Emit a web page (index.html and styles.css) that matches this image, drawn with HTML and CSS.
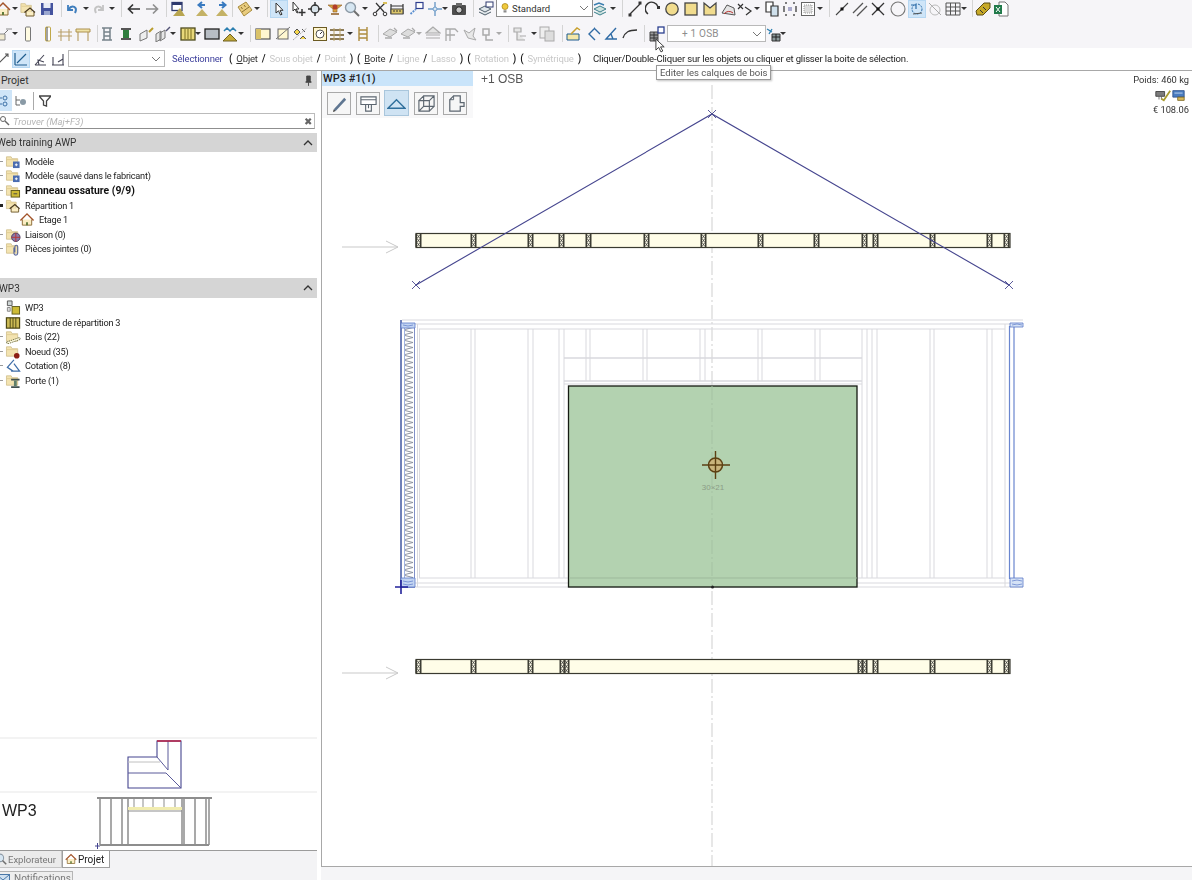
FILE: index.html
```html
<!DOCTYPE html>
<html lang="fr">
<head>
<meta charset="utf-8">
<title>WP3</title>
<link rel="stylesheet" href="styles.css">
</head>
<body>
<svg class="defs" width="0" height="0" aria-hidden="true">
<defs>
<symbol id="folder" viewBox="0 0 16 16"><path d="M1 3h5l1 2h6v8H1z" fill="#f3e3b0" stroke="#cdbb85" stroke-width=".8"/><path d="M1.500 6h11" stroke="#e0cc92"/></symbol>
<symbol id="house" viewBox="0 0 16 16"><path d="M3 8v6h10V8" fill="#fbeec4" stroke="#8b6a33"/><path d="M1 9 8 2l7 7" fill="none" stroke="#a3542a" stroke-width="1.500"/><path d="M7 14v-3h2v3" fill="#5d7a3a"/></symbol>
<symbol id="fhouse" viewBox="0 0 16 16"><use href="#folder" width="14" height="14"/><path d="M6 11v4h8v-4" fill="#fbeec4" stroke="#6f5a2c"/><path d="M4.500 11.500 10 7l5 4.500" fill="none" stroke="#4a3a20" stroke-width="1.300"/></symbol>
<symbol id="save" viewBox="0 0 16 16"><rect x="2" y="2" width="12" height="12" fill="#44539e"/><rect x="4.500" y="2" width="7" height="5" fill="#e8ecf6"/><rect x="5" y="10" width="6" height="4" fill="#9aa7d0"/></symbol>
<symbol id="undo" viewBox="0 0 16 16"><path d="M4 4v5h5" fill="none" stroke="#3f7ebd" stroke-width="1.800"/><path d="M4.500 8.500C8 3 14 6 11 12" fill="none" stroke="#3f7ebd" stroke-width="2"/></symbol>
<symbol id="redo" viewBox="0 0 16 16"><path d="M12 4v5H7" fill="none" stroke="#c4c4c4" stroke-width="1.800"/><path d="M11.500 8.500C8 3 2 6 5 12" fill="none" stroke="#c4c4c4" stroke-width="2"/></symbol>
<symbol id="back" viewBox="0 0 16 16"><path d="M14 8H3M7 3.500 2.500 8 7 12.500" fill="none" stroke="#333" stroke-width="1.700"/></symbol>
<symbol id="fwd" viewBox="0 0 16 16"><path d="M2 8h11M9 3.500 13.500 8 9 12.500" fill="none" stroke="#8f8f8f" stroke-width="1.700"/></symbol>
<symbol id="monitor" viewBox="0 0 16 16"><rect x="2" y="1.500" width="10" height="8" fill="#fff" stroke="#2f3a6e" stroke-width="1.300"/><path d="M2 2h10v2H2z" fill="#2f3a6e"/><path d="M3 15 10 7l5 8z" fill="#b8a550"/></symbol>
<symbol id="up" viewBox="0 0 16 16"><path d="M2 15 8 8l6 7z" fill="#c4b266"/><path d="M11 4H6M8 1 4.500 4 8 7" fill="none" stroke="#3a7ac0" stroke-width="2"/></symbol>
<symbol id="down" viewBox="0 0 16 16"><path d="M2 15 8 8l6 7z" fill="#c4b266"/><path d="M5 4h5M8 1l3.500 3L8 7" fill="none" stroke="#3a7ac0" stroke-width="2"/></symbol>
<symbol id="ruler" viewBox="0 0 16 16"><path d="M1 6 9 1l6 8-8 6z" fill="#e9cc7e" stroke="#a88b3e"/><path d="M4 6l1.500 2M7 4l1.500 2M5 11l7-5" stroke="#8a7030" fill="none"/></symbol>
<symbol id="cursor" viewBox="0 0 16 16"><path d="M5 2v10l2.500-2.200L9.500 14l1.500-.7-2-4h3z" fill="#fff" stroke="#333"/></symbol>
<symbol id="nodeadd" viewBox="0 0 16 16"><path d="M3 1v9l2-2 2 4 1-.5-2-3.500h3z" fill="#fff" stroke="#333"/><path d="M12 8v7M8.500 11.500h7" stroke="#333" stroke-width="1.500"/></symbol>
<symbol id="target" viewBox="0 0 16 16"><circle cx="8" cy="8" r="4" fill="#d9e3ea" stroke="#333" stroke-width="1.300"/><path d="M8 1v4M8 11v4M1 8h4M11 8h4" stroke="#333" stroke-width="1.500"/></symbol>
<symbol id="bow" viewBox="0 0 16 16"><path d="M1 4h14l-5 4v3H6V8z" fill="#d9a441" stroke="#8e5a20" stroke-width=".6"/><circle cx="8" cy="6" r="2.500" fill="#b23c2a"/><path d="M4 13h8" stroke="#8e5a20" stroke-width="1.500"/></symbol>
<symbol id="mag" viewBox="0 0 16 16"><circle cx="6.500" cy="6.500" r="5" fill="#d6e6f2" stroke="#8d9aa6" stroke-width="1.400"/><path d="M10 10l5 5" stroke="#6f6f6f" stroke-width="2"/></symbol>
<symbol id="scis" viewBox="0 0 16 16"><path d="M4 2l8 9M13 2 4 11" stroke="#333" stroke-width="1.200"/><circle cx="3" cy="13" r="1.800" fill="none" stroke="#333"/><circle cx="13" cy="13" r="1.800" fill="none" stroke="#333"/><path d="M11 1h4v2h-4" fill="#d9c05a"/></symbol>
<symbol id="rulerbox" viewBox="0 0 16 16"><path d="M2 3v10M14 3v10M2 5h12" stroke="#333" stroke-width="1.200" fill="none"/><rect x="2" y="8" width="12" height="5" fill="#dcc66a" stroke="#444"/><path d="M5 9v2M8 9v2M11 9v2" stroke="#333"/></symbol>
<symbol id="dotsq" viewBox="0 0 16 16"><rect x="7" y="1.500" width="7" height="6" fill="#fff" stroke="#2f3f8f" stroke-width="1.200"/><path d="M1.500 13 7 8" stroke="#5b8fd0" stroke-width="1.800" stroke-dasharray="2 1"/></symbol>
<symbol id="cross" viewBox="0 0 16 16"><path d="M8 1v14M1 8h14" stroke="#6f9cc8" stroke-width="1.400"/><circle cx="8" cy="8" r="2" fill="#d9e8f5" stroke="#6f9cc8"/></symbol>
<symbol id="camera" viewBox="0 0 16 16"><rect x="1" y="4" width="14" height="10" rx="1" fill="#4e4e4e"/><rect x="5" y="2" width="6" height="3" fill="#6a6a6a"/><circle cx="8" cy="9" r="3.200" fill="#c9c9c9" stroke="#222"/></symbol>
<symbol id="layers" viewBox="0 0 16 16"><path d="M1 8l6-3 6 3-6 3zM1 11l6 3 6-3" fill="#dfe6ea" stroke="#4f5f6a"/><rect x="8" y="1" width="7" height="5" fill="#fff" stroke="#2f3a6e"/></symbol>
<symbol id="bulb" viewBox="0 0 16 16"><circle cx="8" cy="6" r="4" fill="#f0c93c" stroke="#a98616"/><path d="M6 11h4v3H6z" fill="#8c8c8c"/></symbol>
<symbol id="layers2" viewBox="0 0 16 16"><path d="M1 8l6-3 6 3-6 3zM1 11l6 3 6-3" fill="#cfe3df" stroke="#3b7f8c"/><path d="M1 4l5-2 5 2" fill="none" stroke="#3b7fb0" stroke-width="1.500"/></symbol>
<symbol id="line" viewBox="0 0 16 16"><path d="M3 13 13 3" stroke="#333" stroke-width="1.300"/><path d="M1.500 12.500h3v3h-3zM11.500.5h3v3h-3z" fill="#333"/></symbol>
<symbol id="arc" viewBox="0 0 16 16"><path d="M3 13A6.500 6.500 0 1 1 13 6" fill="none" stroke="#333" stroke-width="1.400"/><rect x="12" y="5" width="3" height="3" fill="#333"/></symbol>
<symbol id="circ" viewBox="0 0 16 16"><circle cx="8" cy="8" r="6.200" fill="#f1dc8e" stroke="#444" stroke-width="1.300"/></symbol>
<symbol id="sq" viewBox="0 0 16 16"><rect x="2" y="2" width="12" height="12" fill="#f1dc8e" stroke="#444" stroke-width="1.300"/></symbol>
<symbol id="mm" viewBox="0 0 16 16"><path d="M2 14V2l6 5 6-5v12z" fill="#f1dc8e" stroke="#444" stroke-width="1.200"/></symbol>
<symbol id="arcc" viewBox="0 0 16 16"><path d="M2 12 7 4l7 3 1 7z" fill="#e4e4e4" stroke="#555"/><path d="M4 13A6 6 0 0 1 13 12" fill="none" stroke="#b33"/></symbol>
<symbol id="xtri" viewBox="0 0 16 16"><path d="M1 3l5 5M6 3 1 8M8 6l6 4-5 4" stroke="#333" fill="none" stroke-width="1.200"/></symbol>
<symbol id="docs" viewBox="0 0 16 16"><path d="M2 1h7v10H2z" fill="#fff" stroke="#333" stroke-width="1.200"/><path d="M7 5h7v10H7z" fill="#cfe0ec" stroke="#333" stroke-width="1.200"/></symbol>
<symbol id="dash" viewBox="0 0 16 16"><path d="M3 2h2M3 14h2M11 2h2M11 14h2M2 5v6M14 5v6" stroke="#555" stroke-width="1.500"/><rect x="6" y="6" width="4" height="4" fill="#aac"/></symbol>
<symbol id="frame" viewBox="0 0 16 16"><rect x="1.500" y="1.500" width="13" height="13" fill="#fff" stroke="#666"/><rect x="4" y="4" width="8" height="8" fill="#ddd" stroke="#999" stroke-dasharray="1 1"/></symbol>
<symbol id="sl" viewBox="0 0 16 16"><path d="M2 14 14 2" stroke="#444" stroke-width="1.100"/><rect x="6.500" y="6.500" width="3" height="3" fill="#111"/></symbol>
<symbol id="par" viewBox="0 0 16 16"><path d="M1 12 11 2M5 15 15 5" stroke="#555" stroke-width="1.300"/></symbol>
<symbol id="xx" viewBox="0 0 16 16"><path d="M2 2l12 12M14 2 2 14" stroke="#333" stroke-width="1.300"/><rect x="6.500" y="6.500" width="3" height="3" fill="#111"/></symbol>
<symbol id="ring" viewBox="0 0 16 16"><circle cx="8" cy="8" r="7" fill="none" stroke="#777" stroke-width="1.100"/></symbol>
<symbol id="snap" viewBox="0 0 16 16"><path d="M2 4h5v4" fill="none" stroke="#2b6ca8" stroke-width="1.200"/><circle cx="8" cy="8" r="5" fill="none" stroke="#2b6ca8" stroke-dasharray="2 1"/><path d="M4 13l9-1" stroke="#555"/></symbol>
<symbol id="snap2" viewBox="0 0 16 16"><circle cx="8" cy="9" r="5" fill="none" stroke="#bbb"/><path d="M2 2l12 12" stroke="#aaa"/></symbol>
<symbol id="grid" viewBox="0 0 16 16"><path d="M1 2h14v12H1zM1 6h14M1 10h14M5.500 2v12M10.500 2v12" fill="none" stroke="#555"/></symbol>
<symbol id="wood" viewBox="0 0 16 16"><path d="M1 10 9 2h6v5l-7 7H2z" fill="#c7a928" stroke="#5b4c14"/><path d="M5 9l3 3M8 6l3 3" stroke="#333"/></symbol>
<symbol id="xl" viewBox="0 0 16 16"><path d="M6 1h6l3 3v11H6z" fill="#fff" stroke="#777"/><rect x="1" y="4" width="8" height="9" fill="#217a4b"/><path d="M3 6l4 5M7 6l-4 5" stroke="#fff"/></symbol>
<symbol id="tool1" viewBox="0 0 16 16"><path d="M1 14 11 4" stroke="#777"/><path d="M1 8h7v6H1z" fill="#f1ead0" stroke="#888"/><path d="M9 3h6" stroke="#888"/></symbol>
<symbol id="beam" viewBox="0 0 16 16"><rect x="5.500" y="1" width="5" height="14" rx="1" fill="#fffbe2" stroke="#777"/></symbol>
<symbol id="beamh" viewBox="0 0 16 16"><rect x="5.500" y="1" width="5" height="14" rx="1" fill="#fff" stroke="#c0a84a"/><path d="M7 1v14" stroke="#444"/></symbol>
<symbol id="hframe" viewBox="0 0 16 16"><path d="M1 6h14M1 10h14M4 3v12M12 3v12" stroke="#b9a06a" fill="none" stroke-width="1.100"/></symbol>
<symbol id="hframe2" viewBox="0 0 16 16"><path d="M1 3h14v3H1zM3 6v9M13 6v9" stroke="#ad9150" fill="#f0e3a8"/></symbol>
<symbol id="colg" viewBox="0 0 16 16"><path d="M3 2h10M3 14h10M5 2v12M11 2v12M5 6h6M5 10h6" stroke="#77838a" stroke-width="1.500" fill="none"/></symbol>
<symbol id="coln" viewBox="0 0 16 16"><path d="M3 2h10v2H3zM3 12h10v2H3z" fill="#555"/><rect x="5" y="4" width="6" height="8" fill="#2f7d3e"/></symbol>
<symbol id="iso" viewBox="0 0 16 16"><path d="M1 8l7-4v8l-7 3z" fill="#eee" stroke="#777"/><path d="M10 6l4-4" stroke="#b99c2d" stroke-width="2"/></symbol>
<symbol id="iso2" viewBox="0 0 16 16"><path d="M1 8l5-3v8l-5 3zM5 7l5-3v8l-5 3z" fill="#e6e6e6" stroke="#777"/><path d="M11 5l4-4" stroke="#557" stroke-width="1.500"/></symbol>
<symbol id="ybar" viewBox="0 0 16 16"><rect x="1" y="2" width="14" height="12" fill="#e8d87a" stroke="#4e4a1c" stroke-width="1.300"/><path d="M5 3v10M8 3v10M11 3v10" stroke="#7a6f20"/></symbol>
<symbol id="grect" viewBox="0 0 16 16"><rect x="1" y="3" width="14" height="10" fill="#b7bdc4" stroke="#222" stroke-width="1.300"/></symbol>
<symbol id="tri" viewBox="0 0 16 16"><path d="M1 15 8 8l7 7z" fill="#c4aa38" stroke="#6f6120"/><path d="M2 5l3-3 3 3 3-3 3 3" fill="none" stroke="#2b7fb0" stroke-width="1.500"/></symbol>
<symbol id="tan" viewBox="0 0 16 16"><rect x="1" y="3" width="14" height="10" fill="#fff6cf" stroke="#555" stroke-width="1.200"/><path d="M1 3h5v10H1z" fill="#d9c26a"/></symbol>
<symbol id="cutsq" viewBox="0 0 16 16"><rect x="3" y="3" width="10" height="10" fill="#fff7d0" stroke="#666"/><path d="M1 13 15 1" stroke="#777"/></symbol>
<symbol id="diam" viewBox="0 0 16 16"><path d="M2 6l3-3 3 3-3 3zM8 13l3-3 3 3M10 3l3 3" fill="#f5d64c" stroke="#555"/><path d="M1 14 15 2" stroke="#aaa" stroke-dasharray="2 1"/></symbol>
<symbol id="gauge" viewBox="0 0 16 16"><rect x="1.500" y="1.500" width="13" height="13" fill="#fff6cf" stroke="#6b5a22"/><circle cx="8" cy="8" r="4" fill="#fff" stroke="#555"/><path d="M8 8l2-2" stroke="#333"/></symbol>
<symbol id="brn" viewBox="0 0 16 16"><path d="M1 4h14M1 9h14M1 13h14" stroke="#6a5220" stroke-width="1.500"/><path d="M5 2v13M11 2v13" stroke="#b8a36a"/></symbol>
<symbol id="lad" viewBox="0 0 16 16"><path d="M4 1v14M12 1v14M4 4h8M4 8h8M4 12h8" stroke="#ad8c3e" stroke-width="1.400"/></symbol>
<symbol id="gw1" viewBox="0 0 16 16"><path d="M1 8 8 3l7 3-7 5z" fill="#ddd" stroke="#aaa"/><path d="M3 12h7M12 2l3 3" stroke="#aaa" stroke-width="1.300"/></symbol>
<symbol id="gw2" viewBox="0 0 16 16"><path d="M8 1 1 7h14zM1 9h14M1 12h14" fill="#e4e4e4" stroke="#aaa" stroke-width="1.200"/></symbol>
<symbol id="gw3" viewBox="0 0 16 16"><path d="M2 15V3h9l3 3M6 3v12M2 9h9" fill="none" stroke="#aaa" stroke-width="1.300"/></symbol>
<symbol id="gw4" viewBox="0 0 16 16"><path d="M2 4l5 3 6-5-2 8 3 4-8-2z" fill="#e8e8e8" stroke="#aaa"/></symbol>
<symbol id="gw5" viewBox="0 0 16 16"><path d="M3 3h6v6H3zM6 9v5h7" fill="none" stroke="#aaa" stroke-width="1.500"/></symbol>
<symbol id="gw6" viewBox="0 0 16 16"><path d="M2 2h7v4H2zM5 6v8h8M8 10h6" fill="#e6e6e6" stroke="#aaa" stroke-width="1.200"/></symbol>
<symbol id="gw7" viewBox="0 0 16 16"><rect x="1" y="1" width="9" height="11" fill="#eee" stroke="#aaa"/><rect x="6" y="5" width="9" height="10" fill="#ddd" stroke="#aaa"/></symbol>
<symbol id="wall3" viewBox="0 0 16 16"><path d="M1 8h12v6H1z" fill="#f5e8a8" stroke="#1f5d8f"/><path d="M5 8l6-6 3 2" stroke="#c8a02e" stroke-width="1.500" fill="none"/></symbol>
<symbol id="ang" viewBox="0 0 16 16"><path d="M9 2 3 8l6 6M8 2l6 6" fill="none" stroke="#2f6ba5" stroke-width="1.400"/></symbol>
<symbol id="ang2" viewBox="0 0 16 16"><path d="M13 2 3 13h11M8 8l2 5" fill="none" stroke="#2f6ba5" stroke-width="1.400"/></symbol>
<symbol id="crv" viewBox="0 0 16 16"><path d="M1 12C3 6 7 4 15 4" fill="none" stroke="#333" stroke-width="1.300"/></symbol>
<symbol id="calque" viewBox="0 0 16 16"><path d="M1 6h8v9H1z" fill="#9a9a9a" stroke="#444"/><path d="M1 9h8M1 12h8M5 6v9" stroke="#333"/><rect x="9" y="1" width="6" height="6" fill="#fff" stroke="#2b3f8f" stroke-width="1.300"/></symbol>
<symbol id="calque2" viewBox="0 0 16 16"><path d="M1 3l5 3M6 3 3 8" stroke="#2b7fb0" stroke-width="1.300"/><path d="M6 8h8v7H6z" fill="#8c9a9a" stroke="#333"/><path d="M10 8v7M6 11h8" stroke="#222"/></symbol>
<symbol id="sa" viewBox="0 0 16 16"><path d="M3 13 13 3M10 3h3v3" fill="none" stroke="#555" stroke-width="1.100"/></symbol>
<symbol id="sb" viewBox="0 0 16 16"><path d="M2 14V2M2 14h12M4 12l9-9" fill="none" stroke="#1f5d8f" stroke-width="1.200"/></symbol>
<symbol id="sc" viewBox="0 0 16 16"><path d="M3 14h11M3 14 12 4M7 14l-1-5 6 2" fill="none" stroke="#445" stroke-width="1.100"/></symbol>
<symbol id="sd" viewBox="0 0 16 16"><path d="M2 14h12M3 14V6M13 14V3M8 11l5-3" fill="none" stroke="#445" stroke-width="1.100"/></symbol>
<symbol id="tmodel" viewBox="0 0 16 16"><use href="#folder"/><rect x="8" y="8" width="7" height="7" fill="#4a6cb0"/><path d="M10 11.500h3M11.500 10v3" stroke="#fff"/></symbol>
<symbol id="tpanel" viewBox="0 0 16 16"><use href="#folder"/><rect x="6" y="8" width="9" height="7" fill="#cdbb35" stroke="#5e5a1c"/><path d="M8.500 11.500h4" stroke="#444"/></symbol>
<symbol id="tlink" viewBox="0 0 16 16"><use href="#folder"/><circle cx="11" cy="11" r="4.500" fill="#8a7aa8" stroke="#4a3a60"/><path d="M6.500 11h9M11 6.500v9" stroke="#b33" stroke-width="1"/></symbol>
<symbol id="tclip" viewBox="0 0 16 16"><use href="#folder"/><path d="M9 7v6a2 2 0 0 0 4 0V6a1.500 1.500 0 0 0-3 0v6" fill="none" stroke="#5c6a9c" stroke-width="1.200"/></symbol>
<symbol id="twp" viewBox="0 0 16 16"><path d="M2 1h5v5H2z" fill="#cfd6d6" stroke="#555"/><path d="M2 8h3v4H2z" fill="#ddd" stroke="#888"/><rect x="7" y="7" width="8" height="8" fill="#cdbb35" stroke="#5e5a1c"/></symbol>
<symbol id="tstruct" viewBox="0 0 16 16"><rect x="1" y="3" width="14" height="11" fill="#cdbb55" stroke="#4d4714" stroke-width="1.300"/><path d="M5 3v11M8 3v11M11 3v11" stroke="#4d4714"/></symbol>
<symbol id="tbois" viewBox="0 0 16 16"><use href="#folder"/><path d="M1 14 15 9l1 2-14 5z" fill="#fffbe0" stroke="#6b6b40" stroke-dasharray="1.500 1"/></symbol>
<symbol id="tnoeud" viewBox="0 0 16 16"><use href="#folder"/><circle cx="12" cy="12.500" r="3" fill="#8c1f14"/></symbol>
<symbol id="tcot" viewBox="0 0 16 16"><path d="M9 2 2 10l6 4M6 14h9L9 6" fill="none" stroke="#3f6ea8" stroke-width="1.300"/></symbol>
<symbol id="tporte" viewBox="0 0 16 16"><use href="#folder"/><path d="M6 6h9v2H6zM6 14h9v2H6z" fill="#3f4f4f"/><rect x="9" y="8" width="3" height="6" fill="#5f7f6a"/></symbol>
<symbol id="chev" viewBox="0 0 10 6"><path d="M1 1l4 4 4-4" fill="none" stroke="#777"/></symbol>
<symbol id="vpen" viewBox="0 0 20 20"><path d="M4 16 15 4l2 2L6 18z" fill="#5f7691"/><path d="M4 16l-1 3 3-1" fill="#444"/></symbol>
<symbol id="vtee" viewBox="0 0 20 20"><path d="M2 3h16v8H2zM2 6h16M7 11v7h6v-7M10 11v4" fill="#fff" stroke="#5c6670" stroke-width="1.200"/></symbol>
<symbol id="vroof" viewBox="0 0 20 20"><path d="M1 15 10 6l9 9z" fill="none" stroke="#2f6f9c" stroke-width="1.500"/></symbol>
<symbol id="vcube" viewBox="0 0 20 20"><path d="M2 7h11v11H2zM7 2h11v11H7zM2 7l5-5M13 7l5-5M2 18l5-5M13 18l5-5" fill="none" stroke="#5c6670" stroke-width="1.200"/></symbol>
<symbol id="vexit" viewBox="0 0 20 20"><path d="M4 18V6l4-4h7v7h4v4h-4v5z" fill="none" stroke="#5c6670" stroke-width="1.300"/><path d="M8 2v4H4" fill="none" stroke="#5c6670"/></symbol>
<symbol id="pchk" viewBox="0 0 20 16"><path d="M1 3h11v6H1z" fill="#7c7c7c" stroke="#333"/><path d="M5 9v4M8 9v4" stroke="#555"/><path d="M8 12l3 2 8-12" fill="none" stroke="#a99b2e" stroke-width="2.200"/></symbol>
<symbol id="pcost" viewBox="0 0 16 16"><path d="M1 2h14v8H1z" fill="#4a7cc0" stroke="#2b4f8a"/><path d="M3 5h10" stroke="#cfe0f5"/><path d="M7 14h8v-4H7z" fill="#d6b75c" stroke="#7a6520"/></symbol>
<symbol id="stud" viewBox="0 0 7 14"><rect x=".5" y=".5" width="1.600" height="13" fill="#3d3d33"/><rect x="4.900" y=".5" width="1.600" height="13" fill="#3d3d33"/><path d="M2 1l3 4-3 4 3 4M5 1 2 5l3 4-3 4" fill="none" stroke="#444" stroke-width=".8"/></symbol>
<pattern id="hatch" width="14" height="5" patternUnits="userSpaceOnUse" patternTransform="translate(401 0)"><path d="M4 .5l8 2-8 2" fill="none" stroke="#858a99" stroke-width=".9"/></pattern>
</defs>
</svg>

<div class="app">
  <header class="toolbar">
    <div class="tb-row row-a">
      <span class="t w17"><svg class="i"><use href="#house"/></svg></span><span class="t w8"><b class="dd"></b></span>
      <span class="t w19"><svg class="i"><use href="#fhouse"/></svg></span><span class="t w22"><svg class="i"><use href="#save"/></svg></span><span class="t w3"><b class="sep"></b></span>
      <span class="t w19"><svg class="i"><use href="#undo"/></svg></span><span class="t w8"><b class="dd"></b></span><span class="t w18"><svg class="i"><use href="#redo"/></svg></span><span class="t w12"><b class="dd"></b></span><span class="t w5"><b class="sep"></b></span>
      <span class="t w18"><svg class="i"><use href="#back"/></svg></span><span class="t w22"><svg class="i"><use href="#fwd"/></svg></span><span class="t w4"><b class="sep"></b></span>
      <span class="t w24"><svg class="i"><use href="#monitor"/></svg></span><span class="t w20"><svg class="i"><use href="#up"/></svg></span><span class="t w18"><svg class="i"><use href="#down"/></svg></span><span class="t w5"><b class="sep"></b></span>
      <span class="t w17"><svg class="i"><use href="#ruler"/></svg></span><span class="t w13"><b class="dd"></b></span><span class="t w4"><b class="sep"></b></span>
      <span class="t w19"><svg class="i sel"><use href="#cursor"/></svg></span><span class="t w17"><svg class="i"><use href="#nodeadd"/></svg></span><span class="t w20"><svg class="i"><use href="#target"/></svg></span><span class="t w17"><svg class="i"><use href="#bow"/></svg></span><span class="t w18"><svg class="i"><use href="#mag"/></svg></span><span class="t w10"><b class="dd"></b></span>
      <span class="t w17"><svg class="i"><use href="#scis"/></svg></span><span class="t w20"><svg class="i"><use href="#rulerbox"/></svg></span><span class="t w18"><svg class="i"><use href="#dotsq"/></svg></span><span class="t w15"><svg class="i"><use href="#cross"/></svg></span><span class="t w9"><b class="dd"></b></span><span class="t w22"><svg class="i"><use href="#camera"/></svg></span><span class="t w5"><b class="sep"></b></span>
      <span class="t w18"><svg class="i"><use href="#layers"/></svg></span>
      <span class="combo combo-std"><svg class="i-s"><use href="#bulb"/></svg><span class="combo-text">Standard</span><svg class="chev"><use href="#chev"/></svg></span>
      <span class="t w17"><svg class="i"><use href="#layers2"/></svg></span><span class="t w12"><b class="dd"></b></span><span class="t w5"><b class="sep"></b></span>
      <span class="t w18"><svg class="i"><use href="#line"/></svg></span><span class="t w19"><svg class="i"><use href="#arc"/></svg></span><span class="t w19"><svg class="i"><use href="#circ"/></svg></span><span class="t w19"><svg class="i"><use href="#sq"/></svg></span><span class="t w18"><svg class="i"><use href="#mm"/></svg></span><span class="t w17"><svg class="i"><use href="#arcc"/></svg></span><span class="t w17"><svg class="i"><use href="#xtri"/></svg></span><span class="t w10"><b class="dd"></b></span>
      <span class="t w18"><svg class="i"><use href="#docs"/></svg></span><span class="t w18"><svg class="i"><use href="#dash"/></svg></span><span class="t w17"><svg class="i"><use href="#frame"/></svg></span><span class="t w12"><b class="dd"></b></span><span class="t w5"><b class="sep"></b></span>
      <span class="t w18"><svg class="i"><use href="#sl"/></svg></span><span class="t w18"><svg class="i"><use href="#par"/></svg></span><span class="t w20"><svg class="i"><use href="#xx"/></svg></span><span class="t w19"><svg class="i"><use href="#ring"/></svg></span><span class="t w18"><svg class="i sel"><use href="#snap"/></svg></span><span class="t w18"><svg class="i"><use href="#snap2"/></svg></span><span class="t w16"><svg class="i"><use href="#grid"/></svg></span><span class="t w11"><b class="dd"></b></span><span class="t w3"><b class="sep"></b></span>
      <span class="t w18"><svg class="i"><use href="#wood"/></svg></span><span class="t w18"><svg class="i"><use href="#xl"/></svg></span>
    </div>
    <div class="tb-row row-b">
      <span class="t w15"><svg class="i"><use href="#tool1"/></svg></span><span class="t w8"><b class="dd"></b></span>
      <span class="t w20"><svg class="i"><use href="#beam"/></svg></span><span class="t w17"><svg class="i"><use href="#beamh"/></svg></span><span class="t w18"><svg class="i"><use href="#hframe"/></svg></span><span class="t w22"><svg class="i"><use href="#hframe2"/></svg></span><span class="t w2"><b class="sep"></b></span>
      <span class="t w19"><svg class="i"><use href="#colg"/></svg></span><span class="t w21"><svg class="i"><use href="#coln"/></svg></span><span class="t w16"><svg class="i"><use href="#iso"/></svg></span><span class="t w15"><svg class="i"><use href="#iso2"/></svg></span><span class="t w10"><b class="dd"></b></span><span class="t w15"><svg class="i"><use href="#ybar"/></svg></span><span class="t w9"><b class="dd"></b></span><span class="t w18"><svg class="i"><use href="#grect"/></svg></span><span class="t w16"><svg class="i"><use href="#tri"/></svg></span><span class="t w12"><b class="dd"></b></span><span class="t w5"><b class="sep"></b></span>
      <span class="t w20"><svg class="i"><use href="#tan"/></svg></span><span class="t w17"><svg class="i"><use href="#cutsq"/></svg></span><span class="t w20"><svg class="i"><use href="#diam"/></svg></span><span class="t w17"><svg class="i"><use href="#gauge"/></svg></span><span class="t w18"><svg class="i"><use href="#brn"/></svg></span><span class="t w8"><b class="dd"></b></span><span class="t w23"><svg class="i"><use href="#lad"/></svg></span><span class="t w4"><b class="sep"></b></span>
      <span class="t w18"><svg class="i"><use href="#gw1"/></svg></span><span class="t w16"><svg class="i"><use href="#gw1"/></svg></span><span class="t w9"><b class="dd off"></b></span><span class="t w19"><svg class="i"><use href="#gw2"/></svg></span><span class="t w18"><svg class="i"><use href="#gw3"/></svg></span><span class="t w18"><svg class="i"><use href="#gw4"/></svg></span><span class="t w16"><svg class="i"><use href="#gw5"/></svg></span><span class="t w12"><b class="dd off"></b></span><span class="t w4"><b class="sep"></b></span>
      <span class="t w19"><svg class="i"><use href="#gw6"/></svg></span><span class="t w8"><b class="dd"></b></span><span class="t w23"><svg class="i"><use href="#gw7"/></svg></span><span class="t w4"><b class="sep"></b></span>
      <span class="t w20"><svg class="i"><use href="#wall3"/></svg></span><span class="t w17"><svg class="i"><use href="#ang"/></svg></span><span class="t w19"><svg class="i"><use href="#ang2"/></svg></span><span class="t w22"><svg class="i"><use href="#crv"/></svg></span><span class="t w5"><b class="sep"></b></span>
      <span class="t w18"><svg class="i"><use href="#calque"/></svg></span>
      <span class="combo combo-osb"><span class="combo-text off-text">+ 1 OSB</span><svg class="chev"><use href="#chev"/></svg></span>
      <span class="t w14"><svg class="i"><use href="#calque2"/></svg></span><span class="t w8"><b class="dd"></b></span>
    </div>
  </header>

  <div class="optbar">
    <span class="t w18"><svg class="i"><use href="#sa"/></svg></span><span class="t w19"><svg class="i sel"><use href="#sb"/></svg></span><span class="t w18"><svg class="i"><use href="#sc"/></svg></span><span class="t w18"><svg class="i"><use href="#sd"/></svg></span>
    <span class="combo combo-opt"><svg class="chev"><use href="#chev"/></svg></span>
    <span class="opt-title">Sélectionner</span>
    <span class="opts">
      <b>(</b><span><u>O</u>bjet</span><b>/</b><span class="dis">Sous objet</span><b>/</b><span class="dis">Point</span><b>)</b>
      <b class="gap-l">(</b><span><u>B</u>oite</span><b>/</b><span class="dis">Ligne</span><b>/</b><span class="dis">Lasso</span><b>)</b>
      <b class="gap-l">(</b><span class="dis">Rotation</span><b>)</b>
      <b class="gap-l">(</b><span class="dis">Symétrique</span><b>)</b>
    </span>
    <span class="opt-msg">Cliquer/Double-Cliquer sur les objets ou cliquer et glisser la boite de sélection.</span>
  </div>

  <main class="main">
    <aside class="side">
      <div class="side-head"><span>Projet</span><svg class="pin" viewBox="0 0 10 12"><path d="M3 1h4v5l1 2H2l1-2zM5 8v4" fill="#444" stroke="#444"/></svg></div>
      <div class="side-tools">
        <span class="st st-sel"><svg viewBox="0 0 12 12"><path d="M1 3h4M1 9h4" stroke="#3b6fa5"/><circle cx="8" cy="3" r="2" fill="none" stroke="#3b6fa5"/><circle cx="8" cy="9" r="2" fill="none" stroke="#3b6fa5"/></svg></span>
        <span class="st"><svg viewBox="0 0 12 12"><path d="M1 1v9h4M1 5h4" fill="none" stroke="#666"/><circle cx="8" cy="7" r="3" fill="#8a9aa6"/></svg></span>
        <b class="st-sep"></b>
        <span class="st"><svg viewBox="0 0 12 12"><path d="M0 1h12L7.500 6v5l-3-1V6z" fill="#fff" stroke="#444" stroke-width="1.300"/></svg></span>
      </div>
      <div class="search"><svg class="s-ic" viewBox="0 0 10 10"><circle cx="3" cy="3" r="2.500" fill="none" stroke="#666"/><path d="M5 5l4 4" stroke="#666" stroke-width="1.500"/></svg><span class="s-ph">Trouver (Maj+F3)</span><span class="s-x">✖</span></div>

      <div class="sec"><span class="sec-a">Web training AWP</span><svg class="caret" viewBox="0 0 10 6"><path d="M1 5l4-4 4 4" fill="none" stroke="#333" stroke-width="1.300"/></svg></div>
      <ul class="tree">
        <li><svg class="ti"><use href="#tmodel"/></svg>Modèle</li>
        <li><svg class="ti"><use href="#tmodel"/></svg>Modèle (sauvé dans le fabricant)</li>
        <li class="strong"><svg class="ti"><use href="#tpanel"/></svg>Panneau ossature (9/9)</li>
        <li class="open"><svg class="ti"><use href="#fhouse"/></svg>Répartition 1</li>
        <li class="sub"><svg class="ti"><use href="#house"/></svg>Etage 1</li>
        <li><svg class="ti"><use href="#tlink"/></svg>Liaison (0)</li>
        <li><svg class="ti"><use href="#tclip"/></svg>Pièces jointes (0)</li>
      </ul>

      <div class="sec sec-2"><span class="sec-b">WP3</span><svg class="caret" viewBox="0 0 10 6"><path d="M1 5l4-4 4 4" fill="none" stroke="#333" stroke-width="1.300"/></svg></div>
      <ul class="tree">
        <li class="nt"><svg class="ti"><use href="#twp"/></svg>WP3</li>
        <li class="nt"><svg class="ti"><use href="#tstruct"/></svg>Structure de répartition 3</li>
        <li><svg class="ti"><use href="#tbois"/></svg>Bois (22)</li>
        <li><svg class="ti"><use href="#tnoeud"/></svg>Noeud (35)</li>
        <li><svg class="ti"><use href="#tcot"/></svg>Cotation (8)</li>
        <li><svg class="ti"><use href="#tporte"/></svg>Porte (1)</li>
      </ul>

      <div class="thumbs">
        <div class="thumb thumb-plan">
          <svg class="plan" viewBox="0 0 317 55" width="317" height="55">
            <path d="M128 19h29V3h24v47h-53z" fill="none" stroke="#45458f" stroke-width="1.100"/>
            <path d="M128 35h38l15 15M157 19l11 13M168 3v29" fill="none" stroke="#5a5a9a"/>
            <path d="M128 24h32" stroke="#c0c0c0"/>
            <path d="M157 3h24" stroke="#b3244a" stroke-width="1.600"/>
          </svg>
        </div>
        <div class="thumb thumb-wall">
          <span class="wp-label">WP3</span>
          <svg class="wallt" viewBox="0 0 125 56" width="125" height="56">
            <g stroke="#8d8d8d" fill="none">
              <path d="M2 5h115" stroke-width="2"/>
              <path d="M5 5v47M16 5v47M27 5v47M33 5v47M87 5v47M89 5v47M100 5v47M111 5v47M114 5v47" stroke-width="1.500"/>
              <path d="M5 52h109" stroke-width="2"/>
              <path d="M33 18h54" stroke-width="1.200"/>
              <path d="M39 5v11M48 5v11M58 5v11M69 5v11M80 5v11" stroke-width="1"/>
            </g>
            <rect x="33" y="14" width="54" height="3" fill="#f1ecb0"/>
            <path d="M0 53h5M2.500 50v6" stroke="#44448f"/>
          </svg>
        </div>
      </div>
      <div class="tabs">
        <span class="tab"><svg class="tab-i"><use href="#mag"/></svg>Explorateur</span>
        <span class="tab tab-on"><svg class="tab-i"><use href="#house"/></svg>Projet</span>
      </div>
      <div class="notif"><span class="notif-tab"><svg class="notif-i" viewBox="0 0 14 10"><rect x=".5" y=".5" width="13" height="9" fill="#cfe0f0" stroke="#4a78a8"/><path d="M1 1l6 5 6-5" fill="none" stroke="#4a78a8"/></svg>Notifications</span></div>
    </aside>

    <section class="right">
      <div class="view">
        <svg class="drawing" viewBox="322 71 870 795" width="870" height="795">
          <path d="M712 85v781" stroke="#cfcfcf" stroke-dasharray="14 3 2 3"/>
          <g fill="none" stroke="#d9d9de">
            <path d="M402 320h621M402 324h621M419 329h586M419 578h586M402 583h621M402 587h621"/>
            <path d="M417.500 324v263M419.500 329v249"/>
            <path d="M471 329v249M475 329v249M528 329v249M533 329v249M559 329v249M564 329v249M862 329v249M867 329v249M872 329v249M877 329v249M930 329v249M934 329v249M987 329v249M992 329v249M1005 324v263"/>
            <path d="M586 329v52M590 329v52M643 329v52M647 329v52M700 329v52M705 329v52M758 329v52M762 329v52M815 329v52M820 329v52"/>
            <path d="M564 358h298M564 381h298" stroke-width="1.500"/>
            <path d="M564 384h298"/>
          </g>
          <rect x="401.500" y="323.500" width="13" height="264" fill="url(#hatch)" stroke="#8090c8"/>
          <path d="M404.500 328v250" stroke="#9fb3e2"/>
          <path d="M401 320v268" stroke="#6f80b8" stroke-width="2"/>
          <path d="M401 323h14v5h-14zM401 578h14v9h-14z" fill="#c3d5f2" stroke="#5a78c8" stroke-width=".8"/>
          <path d="M403 325l5 1 5-1M403 581l5 1 5-1M403 584l5 1 5-1" fill="none" stroke="#5a78c8" stroke-width=".7"/>
          <path d="M395 587h13M401 580v14" stroke="#22229a" stroke-width="1.600"/>
          <path d="M1009.500 326v253M1014 326v253" stroke="#6a86cf" stroke-width="1.200"/>
          <path d="M1010 323h13v4h-13zM1010 578h13v9h-13z" fill="#d5e2f6" stroke="#5a78c8" stroke-width=".8"/>
          <path d="M1012 325l5-1 5 1M1012 581l5-1 5 1M1012 584l5 1 5-1" fill="none" stroke="#5a78c8" stroke-width=".7"/>
          <rect x="568.500" y="386" width="288.500" height="201" fill="#b3d2b0" stroke="#151a12" stroke-width="1.300"/>
          <path d="M712 386v201" stroke="#a5c2a3" stroke-dasharray="14 3 2 3"/>
          <path d="M569 578h288" stroke="#9db99b"/>
          <circle cx="712.500" cy="587" r="1.500" fill="#222"/>
          <circle cx="715.500" cy="465" r="7" fill="#c9b47c" stroke="#5c4013" stroke-width="1.500"/>
          <path d="M702 465h28M715.500 451v28" stroke="#5c4013" stroke-width="1.400"/>
          <text class="dim" x="713" y="490" text-anchor="middle">30×21</text>

          <g class="strip">
            <rect x="416" y="233.500" width="594" height="14" fill="#fffde8" stroke="#3a3a30" stroke-width="1.200"/>
            <use href="#stud" x="415" y="233.500" width="7" height="14"/><use href="#stud" x="470" y="233.500" width="7" height="14"/><use href="#stud" x="527" y="233.500" width="7" height="14"/><use href="#stud" x="558" y="233.500" width="7" height="14"/><use href="#stud" x="585" y="233.500" width="7" height="14"/><use href="#stud" x="643" y="233.500" width="7" height="14"/><use href="#stud" x="700" y="233.500" width="7" height="14"/><use href="#stud" x="757" y="233.500" width="7" height="14"/><use href="#stud" x="813" y="233.500" width="7" height="14"/><use href="#stud" x="861" y="233.500" width="7" height="14"/><use href="#stud" x="872" y="233.500" width="7" height="14"/><use href="#stud" x="929" y="233.500" width="7" height="14"/><use href="#stud" x="986" y="233.500" width="7" height="14"/><use href="#stud" x="1003" y="233.500" width="7" height="14"/>
          </g>
          <path d="M416 285 712 114 1009 285" fill="none" stroke="#46468f" stroke-width="1.100"/>
          <path d="M412 281l8 8M420 281l-8 8M708 110l8 8M716 110l-8 8M1005 281l8 8M1013 281l-8 8" stroke="#46468f" stroke-width=".9"/>
          <g class="strip">
            <rect x="416" y="659.500" width="594" height="14" fill="#fffde8" stroke="#3a3a30" stroke-width="1.200"/>
            <use href="#stud" x="415" y="659.500" width="7" height="14"/><use href="#stud" x="470" y="659.500" width="7" height="14"/><use href="#stud" x="527" y="659.500" width="7" height="14"/><use href="#stud" x="559" y="659.500" width="7" height="14"/><use href="#stud" x="563" y="659.500" width="7" height="14"/><use href="#stud" x="857" y="659.500" width="7" height="14"/><use href="#stud" x="861" y="659.500" width="7" height="14"/><use href="#stud" x="872" y="659.500" width="7" height="14"/><use href="#stud" x="929" y="659.500" width="7" height="14"/><use href="#stud" x="986" y="659.500" width="7" height="14"/><use href="#stud" x="1003" y="659.500" width="7" height="14"/>
          </g>
          <path d="M342 247h56M386 241l12 6-12 6M342 673h56M386 667l12 6-12 6" fill="none" stroke="#c9c9c9"/>
        </svg>

        <div class="view-head">
          <div class="view-left">
            <div class="view-tab">WP3 #1(1)</div>
            <div class="view-btns">
              <span class="vb"><svg viewBox="0 0 20 20"><use href="#vpen"/></svg></span>
              <span class="vb"><svg viewBox="0 0 20 20"><use href="#vtee"/></svg></span>
              <span class="vb vb-on"><svg viewBox="0 0 20 20"><use href="#vroof"/></svg></span>
              <span class="vb"><svg viewBox="0 0 20 20"><use href="#vcube"/></svg></span>
              <span class="vb"><svg viewBox="0 0 20 20"><use href="#vexit"/></svg></span>
            </div>
          </div>
          <div class="view-osb">+1 OSB</div>
          <div class="view-info">
            <div class="info-line">Poids: 460 kg</div>
            <div class="info-ic"><svg class="pi"><use href="#pchk"/></svg><svg class="pi2"><use href="#pcost"/></svg></div>
            <div class="info-line">€ 108.06</div>
          </div>
        </div>
      </div>
      <div class="right-foot"></div>
    </section>
  </main>

  <div class="tooltip">Editer les calques de bois</div>
  <svg class="mouse" viewBox="0 0 12 16"><path d="M1 1v12l3-3 2.500 5 2-1-2.500-4.500H10z" fill="#fff" stroke="#333"/></svg>
</div>
</body>
</html>
```

FILE: styles.css
```css
* { box-sizing: border-box; }
html, body { margin: 0; padding: 0; }
body { background: #fff; font-family: Roboto, "Liberation Sans", Arial, sans-serif; color: #222; overflow: hidden; }
.defs { position: absolute; }
.app { position: relative; width: 1192px; height: 880px; overflow: hidden; display: flex; flex-direction: column; filter: blur(.35px); }

.toolbar { height: 48px; background: #f6f5f8; flex: none; overflow: hidden; }
.tb-row { display: flex; align-items: center; height: 17px; }
.row-a { margin-left: -5px; }
.row-b { margin-left: -3px; margin-top: 8px; }
.t { flex: none; display: flex; align-items: center; height: 16px; }
.w2 { width: 2px; } .w3 { width: 3px; } .w4 { width: 4px; } .w5 { width: 5px; }
.w8 { width: 8px; } .w9 { width: 9px; } .w10 { width: 10px; } .w11 { width: 11px; }
.w12 { width: 12px; } .w13 { width: 13px; } .w14 { width: 14px; } .w15 { width: 15px; }
.w16 { width: 16px; } .w17 { width: 17px; } .w18 { width: 18px; } .w19 { width: 19px; }
.w20 { width: 20px; } .w21 { width: 21px; } .w22 { width: 22px; } .w23 { width: 23px; } .w24 { width: 24px; }
.i { width: 16px; height: 16px; flex: none; overflow: visible; }
.i.sel { background: #cfe5f8; outline: 1px solid #b6d7f2; outline-offset: 0; }
.dd { display: block; flex: none; width: 0; height: 0; border-left: 3px solid transparent; border-right: 3px solid transparent; border-top: 3px solid #333; }
.dd.off { border-top-color: #aaa; }
.sep { display: block; flex: none; width: 1px; height: 17px; background: #d4d4d4; }

.combo { flex: none; display: flex; align-items: center; background: #fff; border: 1px solid #b9b9b9; height: 17px; font-size: 9.5px; }
.combo-std { width: 97px; border-top: 0; padding-left: 2px; border-right-color: #8f8f8f; border-bottom-color: #8f8f8f; border-left-color: #8f8f8f; }
.combo-osb { width: 99px; padding-left: 14px; border-width: 1px; }
.combo-opt { width: 97px; height: 17px; justify-content: flex-end; }
.combo-text { flex: 1; color: #333; }
.off-text { color: #8d8d8d; font-size: 10px; letter-spacing: .2px; }
.i-s { width: 12px; height: 12px; margin-right: 1px; }
.chev { width: 10px; height: 6px; margin-right: 3px; flex: none; }

.optbar { height: 23px; flex: none; background: #fff; border-bottom: 1px solid #a8a8a8; display: flex; align-items: center; margin-left: -5px; padding-bottom: 1px; font-size: 9.5px; letter-spacing: -.16px; white-space: nowrap; }
.opt-title { color: #3c3f9c; margin-left: 7px; width: 57px; flex: none; }
.opts { display: flex; flex: none; gap: 4px; width: 364px; align-items: center; color: #333; }
.opts b { font-weight: 500; font-size: 10px; color: #111; }
.opts .dis { color: #c8c8c8; }
.opt-msg { color: #222; }

.main { flex: 1; display: flex; min-height: 0; }
.side { width: 317px; flex: none; display: flex; flex-direction: column; background: #fff; margin-right: 4px; overflow: hidden; font-size: 10px; }
.side-head { height: 18px; flex: none; background: #d5d5d5; display: flex; align-items: center; justify-content: space-between; padding: 0 4px 0 1px; font-size: 10.5px; color: #333; }
.pin { width: 9px; height: 11px; }
.side-tools { height: 23px; flex: none; display: flex; align-items: center; margin-left: -6px; }
.st { width: 18px; height: 21px; display: flex; align-items: center; justify-content: center; }
.st svg { width: 12px; height: 12px; }
.st-sel { background: #cfe5f8; }
.st-sep { width: 1px; height: 18px; background: #aaa; margin: 0 2px 0 3px; }
.search { height: 16px; margin: 1px 2px 0 -2px; flex: none; border: 1px solid #bbb; border-bottom-color: #8f8f8f; display: flex; align-items: center; padding: 0 2px 0 1px; }
.s-ic { width: 10px; height: 10px; flex: none; }
.s-ph { flex: 1; color: #b5b5b5; font-style: italic; font-size: 9.5px; padding-left: 3px; }
.s-x { color: #666; font-size: 10px; }

.sec { height: 19px; flex: none; margin-top: 4px; background: #d5d5d5; display: flex; align-items: center; justify-content: space-between; padding-right: 4px; font-size: 10px; color: #333; }
.sec-2 { margin-top: 22px; height: 20px; }
.sec-a { margin-left: -3px; }
.sec-b { margin-left: -1px; }
.caret { width: 10px; height: 6px; }

.tree { list-style: none; margin: 0; padding: 2px 0 0; flex: none; }
.tree li { height: 14.6px; display: flex; align-items: center; color: #222; font-size: 9.2px; letter-spacing: -.25px; white-space: nowrap; }
.tree li::before { content: ""; flex: none; width: 3px; height: 1px; margin-right: 2px; background: #999; }
.tree .open::before { height: 3px; background: #222; }
.tree .nt::before { background: transparent; }
.tree .strong { font-size: 10.4px; font-weight: 700; color: #111; letter-spacing: 0; }
.tree .sub { padding-left: 14px; }
.tree .sub::before { background: transparent; }
.ti { width: 16px; height: 15px; margin-right: 4px; flex: none; }

.thumbs { margin-top: auto; flex: none; background: #fff; }
.thumb { display: flex; }
.thumb-plan { height: 56px; border-top: 2px solid #f3f3f3; border-bottom: 2px solid #f3f3f3; }
.thumb-wall { height: 57px; align-items: flex-start; }
.plan { margin-top: -1px; }
.wp-label { width: 95px; padding: 9px 0 0 2px; font: 16px "Liberation Sans", Arial, sans-serif; color: #222; height: 40px; flex: none; }
.wallt { flex: none; }

.tabs { height: 18px; flex: none; display: flex; background: #f3f3f5; border-top: 1px solid #9b9b9b; font-size: 10px; }
.tab { height: 17px; display: flex; align-items: center; color: #777; background: #ebebeb; border: 1px solid #c5c5c5; border-top: 0; margin-left: -6px; width: 68px; font-size: 9.5px; }
.tab-i { width: 12px; height: 12px; flex: none; margin-right: 1px; }
.tab-on { margin-left: 0; width: 48px; color: #222; background: #fff; border-color: #a0a0a0; padding-left: 2px; font-size: 10px; }
.notif { height: 12px; flex: none; background: #f3f3f5; padding-top: 3px; overflow: hidden; }
.notif-tab { display: flex; align-items: center; height: 14px; width: 78px; margin-left: -5px; color: #777; border: 1px solid #b5b5b5; border-bottom: 0; background: #eee; font-size: 10px; }
.notif-i { width: 14px; height: 10px; margin-right: 4px; }

.right { flex: 1; display: flex; flex-direction: column; min-width: 0; }
.view { position: relative; flex: 1; border-left: 1px solid #a8a8a8; border-bottom: 1px solid #a8a8a8; background: #fff; overflow: hidden; }
.drawing { position: absolute; left: 0; top: 0; }
.dim { font: 8px "Liberation Sans", Arial, sans-serif; fill: #8b9c87; }
.right-foot { height: 13px; flex: none; background: #f5f5f7; }

.view-head { position: relative; display: flex; align-items: flex-start; }
.view-left { width: 151px; flex: none; background: #f8f8f9; height: 47px; }
.view-tab { height: 15px; background: #c9e4fa; font-size: 11px; font-weight: 500; padding: 1px 0 0 1px; color: #222; }
.view-btns { display: flex; padding: 4px 0 0 5px; gap: 5px; align-items: center; }
.vb { width: 24px; height: 23px; border: 1px solid #a9a9a9; background: #f6f6f6; display: flex; align-items: center; justify-content: center; }
.vb svg { width: 19px; height: 19px; }
.vb-on { width: 25px; height: 26px; margin-left: -1px; background: #cfe3f3; border-color: #a9c6dc; }
.view-osb { margin-left: 8px; font: 12px "Liberation Sans", Arial, sans-serif; color: #555; padding-top: 1px; }
.view-info { margin-left: auto; text-align: right; padding: 2px 3px 0 0; font-size: 9.3px; color: #333; }
.info-line { height: 14px; line-height: 13px; }
.info-ic { display: flex; justify-content: flex-end; height: 16px; gap: 1px; padding-right: 4px; align-items: center; }
.pi { width: 16px; height: 13px; }
.pi2 { width: 13px; height: 13px; }

.tooltip { position: absolute; left: 656px; top: 65px; width: 115px; height: 15px; background: #fff; border: 1px solid #9a9a9a; box-shadow: 1px 1px 2px rgba(0,0,0,.25); font-size: 9.5px; color: #555; display: flex; align-items: center; padding-left: 3px; white-space: nowrap; }
.mouse { position: absolute; left: 655px; top: 38px; width: 11px; height: 15px; }
```
